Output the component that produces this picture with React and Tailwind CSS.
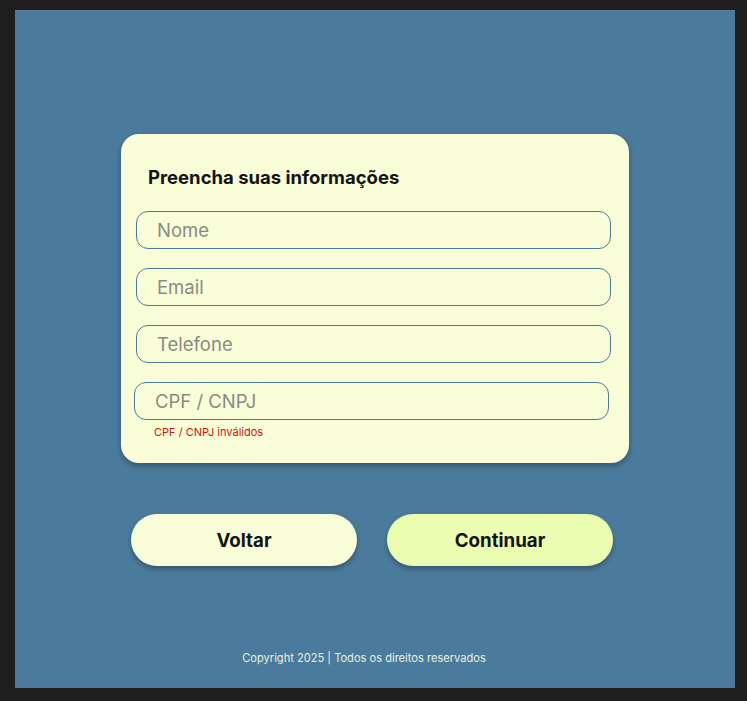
import { useState } from "react";

export default function App() {
  const [form, setForm] = useState({ nome: "", email: "", telefone: "", doc: "" });

  const update = (key) => (e) => setForm({ ...form, [key]: e.target.value });

  return (
    <div className="h-[701px] w-[747px] bg-[#1e1e1e] pt-[10px] pl-[15px] font-['Inter',sans-serif]">
      <div className="w-[720px] h-[678px] bg-[#4b7b9c] border-t border-[#5a7f99] flex flex-col items-center">
        {/* Card */}
        <div className="mt-[123px] w-[508px] h-[329px] bg-[#f9fed8] rounded-[18px] shadow-[0_3px_6px_rgba(0,0,0,0.3)] flex flex-col pt-[31px]">
          <h1 className="ml-[27px] text-[18.5px] leading-[24px] font-bold text-[#141414]">
            Preencha suas informações
          </h1>

          <div className="mt-[22px] flex flex-col gap-[19px]">
            <input
              value={form.nome}
              onChange={update("nome")}
              placeholder="Nome"
              className="ml-[15px] w-[475px] h-[38px] rounded-[12px] border border-[#4b7b9c] bg-transparent pl-[20px] text-[18.5px] text-[#333] placeholder:text-[#8a8a85] outline-none"
            />
            <input
              value={form.email}
              onChange={update("email")}
              placeholder="Email"
              className="ml-[15px] w-[475px] h-[38px] rounded-[12px] border border-[#4b7b9c] bg-transparent pl-[20px] text-[18.5px] text-[#333] placeholder:text-[#8a8a85] outline-none"
            />
            <input
              value={form.telefone}
              onChange={update("telefone")}
              placeholder="Telefone"
              className="ml-[15px] w-[475px] h-[38px] rounded-[12px] border border-[#4b7b9c] bg-transparent pl-[20px] text-[18.5px] text-[#333] placeholder:text-[#8a8a85] outline-none"
            />
            <div className="flex flex-col">
              <input
                value={form.doc}
                onChange={update("doc")}
                placeholder="CPF / CNPJ"
                className="ml-[13px] w-[475px] h-[38px] rounded-[12px] border border-[#4b7b9c] bg-transparent pl-[20px] text-[18.5px] text-[#333] placeholder:text-[#8a8a85] outline-none"
              />
              <p className="ml-[33px] mt-[4px] text-[11px] leading-[16px] text-[#d01010]">
                CPF / CNPJ inválidos
              </p>
            </div>
          </div>
        </div>

        {/* Buttons */}
        <div className="mt-[51px] flex gap-[30px] -translate-x-[3px]">
          <button className="w-[226px] h-[52px] pt-[3px] rounded-full bg-[#f9fed8] shadow-[0_3px_5px_rgba(0,0,0,0.3)] text-[18.7px] font-bold text-[#141414]">
            Voltar
          </button>
          <button className="w-[226px] h-[52px] pt-[3px] rounded-full bg-[#ebfdb0] shadow-[0_3px_5px_rgba(0,0,0,0.3)] text-[18.7px] font-bold text-[#141414]">
            Continuar
          </button>
        </div>

        {/* Footer */}
        <footer className="mt-[84px] text-[11.1px] leading-[16px] text-[#e8f0dc] -translate-x-[11px]">
          Copyright 2025 | Todos os direitos reservados
        </footer>
      </div>
    </div>
  );
}
